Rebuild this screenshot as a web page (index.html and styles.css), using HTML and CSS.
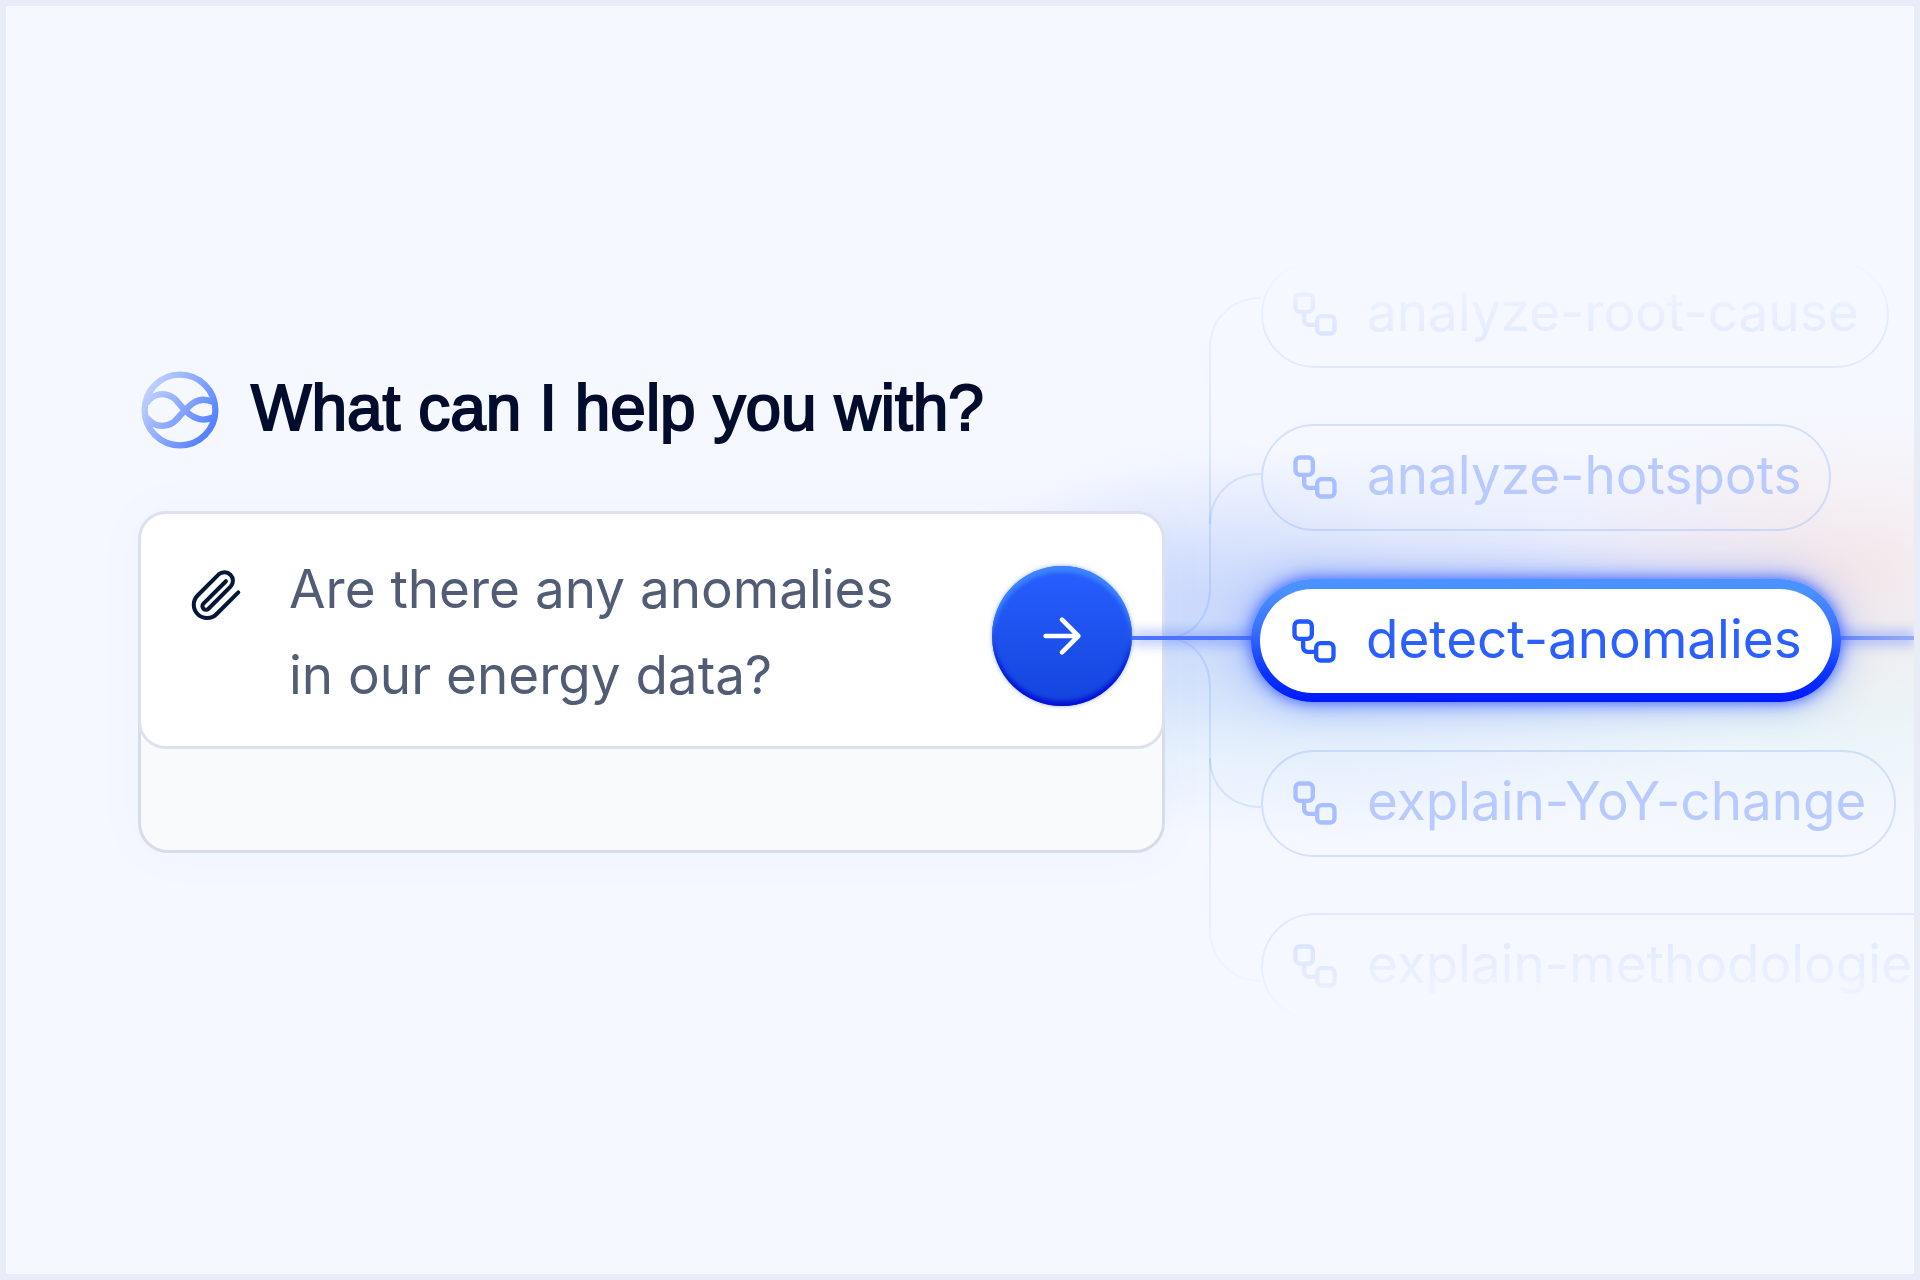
FILE: index.html
```html
<!DOCTYPE html>
<html lang="en">
<head>
    <meta charset="utf-8">
    <title>What can I help you with?</title>
    <link rel="stylesheet" href="styles.css">
</head>
<body>
    <!-- shared icon for every skill -->
    <svg class="defs" width="0" height="0" aria-hidden="true">
        <symbol id="flow" viewBox="0 0 24 24">
            <rect x="3" y="3" width="8" height="8" rx="2"/>
            <path d="M7 11v4a2 2 0 0 0 2 2h4"/>
            <rect x="13" y="13" width="8" height="8" rx="2"/>
        </symbol>
    </svg>

    <main class="frame">
        <div class="glow"></div>

        <section class="ask">
            <header class="title">
                <svg class="logo" viewBox="62 64 236 236" aria-hidden="true">
                    <defs>
                        <linearGradient id="logoFill" gradientUnits="userSpaceOnUse" x1="80" y1="120" x2="270" y2="240">
                            <stop offset="0" stop-color="#bfd1ff"/>
                            <stop offset="1" stop-color="#5681ff"/>
                        </linearGradient>
                    </defs>
                    <g fill="none" stroke="url(#logoFill)" stroke-width="19">
                        <circle cx="180" cy="182" r="107"/>
                        <path d="M78 162C92 142 108 134 125 134C165 134 175 165 195 183C212 200 228 211 250 211C262 211 270 209 282 204"/>
                        <path d="M78 204C92 222 108 230 125 230C165 230 175 200 195 183C212 166 228 151 250 151C262 151 270 153 282 158"/>
                    </g>
                </svg>
                <h1>What can I help you with?</h1>
            </header>

            <form class="card">
                <div class="prompt">
                    <button class="attach" type="button" aria-label="Attach a file">
                        <svg viewBox="187 212 143 148">
                            <path d="M325 278L259.6 343.4A39.6 39.6 0 0 1 203.6 287.4L266.5 224.5A25.5 25.5 0 0 1 302.5 260.5L236.1 326.9A10.6 10.6 0 0 1 221.1 311.9L288 245"/>
                        </svg>
                    </button>
                    <textarea class="question" rows="2" aria-label="Question">Are there any anomalies
in our energy data?</textarea>
                    <button class="send" type="submit" aria-label="Send">
                        <svg viewBox="0 0 24 24">
                            <path d="M5 12h14M12 5l7 7-7 7"/>
                        </svg>
                    </button>
                </div>
            </form>
        </section>

        <svg class="wires" viewBox="0 0 96 760" aria-hidden="true">
            <defs>
                <linearGradient id="wireFade" gradientUnits="userSpaceOnUse" x1="0" y1="30" x2="0" y2="730">
                    <stop offset="0" stop-color="#2a6cff" stop-opacity=".05"/>
                    <stop offset=".3" stop-color="#2a6cff" stop-opacity=".14"/>
                    <stop offset=".7" stop-color="#2a6cff" stop-opacity=".14"/>
                    <stop offset="1" stop-color="#2a6cff" stop-opacity=".02"/>
                </linearGradient>
                <linearGradient id="mainFade" gradientUnits="userSpaceOnUse" x1="0" y1="0" x2="750" y2="0">
                    <stop offset="0" stop-color="#4a74ff"/>
                    <stop offset=".9" stop-color="#6e8efa"/>
                    <stop offset="1" stop-color="#93abf5"/>
                </linearGradient>
            </defs>
            <g class="branch" stroke="url(#wireFade)">
                <path d="M0 378C28 378 45 356 45 328V88C45 60 66 38 96 38"/>
                <path d="M45 264C45 236 66 214 96 214"/>
                <path d="M0 378C28 378 45 400 45 428V670C45 698 66 721 96 721"/>
                <path d="M45 498C45 526 66 547 96 547"/>
            </g>
            <rect class="main-glow" x="-33" y="370" width="783" height="16"/>
            <rect x="-33" y="376" width="783" height="4" fill="url(#mainFade)"/>
        </svg>

        <ul class="skills">
            <li><button type="button" class="skill far top"><svg><use href="#flow"/></svg><span>analyze-root-cause</span></button></li>
            <li><button type="button" class="skill"><svg><use href="#flow"/></svg><span>analyze-hotspots</span></button></li>
            <li><button type="button" class="skill active"><svg><use href="#flow"/></svg><span>detect-anomalies</span></button></li>
            <li><button type="button" class="skill"><svg><use href="#flow"/></svg><span>explain-YoY-change</span></button></li>
            <li><button type="button" class="skill far bottom"><svg><use href="#flow"/></svg><span>explain-methodologies</span></button></li>
        </ul>
    </main>
</body>
</html>
```
FILE: styles.css
```css
*{
    box-sizing: border-box;
    margin: 0;
    padding: 0;
}
body{
    font-family: Inter, "Liberation Sans", sans-serif;
    color: #020d2d;
}
button, textarea{
    border: 0;
    background: none;
    font: inherit;
    color: inherit;
}
.defs{
    position: absolute;
}
.frame{
    position: relative;
    display: flex;
    align-items: center;
    min-height: 100vh;
    padding-left: 132px;
    border: 6px solid #e8ecf7;
    background: #f5f8ff;
    overflow: hidden;
}

/* soft colours behind the skills */
.glow{
    position: absolute;
    top: 0;
    right: 0;
    bottom: 0;
    width: 960px;
    background:
        radial-gradient(ellipse 300px 160px at 890px 565px, rgba(246,212,206,.42), rgba(246,212,206,.22) 45%, rgba(246,212,206,0)),
        radial-gradient(ellipse 360px 140px at 850px 700px, rgba(212,236,232,.42), rgba(212,236,232,.22) 45%, rgba(212,236,232,0)),
        radial-gradient(ellipse 220px 160px at 250px 590px, rgba(150,180,255,.24), rgba(150,180,255,.12) 45%, rgba(150,180,255,0)),
        radial-gradient(ellipse 560px 150px at 480px 590px, rgba(175,185,245,.38), rgba(175,185,245,.18) 45%, rgba(175,185,245,0)),
        radial-gradient(ellipse 450px 170px at 380px 665px, rgba(165,205,243,.42), rgba(165,205,243,.22) 45%, rgba(165,205,243,0));
}

/* left side */
.ask{
    position: relative;
    flex: 1;
    margin-bottom: 56px;
}
.title{
    display: flex;
    align-items: center;
    gap: 32px;
    margin-left: 3px;
    margin-bottom: 62px;
}
.logo{
    width: 78px;
    height: 78px;
}
h1{
    padding-bottom: 4px;
    font-family: "Liberation Sans", Arial, sans-serif;
    font-size: 64px;
    line-height: 74px;
    font-weight: 400;
    white-space: nowrap;
    -webkit-text-stroke: 2px #020d2d;
}
.card{
    padding-bottom: 104px;
    border: 3px solid #d5dcea;
    border-radius: 30px;
    background: #f9fafc;
    box-shadow: 0 0 50px rgba(90,130,255,.04);
}
.prompt{
    display: flex;
    align-items: flex-start;
    margin: -3px;
    padding: 32px 30px 28px 51px;
    border: 3px solid #dce1ed;
    border-radius: 28px;
    background: #fff;
}
.attach{
    width: 48px;
    height: 50px;
    margin-top: 24px;
}
.attach svg{
    display: block;
    width: 100%;
    height: 100%;
    overflow: visible;
    fill: none;
    stroke: #04173a;
    stroke-width: 12;
    stroke-linecap: round;
}
.question{
    flex: 1;
    min-width: 0;
    height: 172px;
    padding-left: 49px;
    font-size: 53px;
    line-height: 86px;
    color: #525d75;
    resize: none;
    overflow: hidden;
}
.send{
    display: grid;
    place-items: center;
    width: 140px;
    height: 140px;
    margin-top: 20px;
    border-radius: 50%;
    background: linear-gradient(#285fff, #1344dc);
    box-shadow: inset 0 6px 4px #3d86ff, inset 0 -5px 4px #0412d6, 0 0 4px rgba(40,90,255,.5);
}
.send svg{
    width: 56px;
    height: 56px;
    fill: none;
    stroke: #fff;
    stroke-width: 2;
    stroke-linecap: round;
    stroke-linejoin: round;
}

/* connectors */
.wires{
    position: relative;
    flex: none;
    width: 96px;
    height: 760px;
    overflow: visible;
    fill: none;
}
.branch{
    stroke-width: 2;
}
.main-glow{
    fill: rgba(80,120,255,.35);
    filter: blur(6px);
}

/* skills */
.skills{
    position: relative;
    flex: none;
    display: flex;
    flex-direction: column;
    gap: 56px;
    width: 653px;
    list-style: none;
}
.skill{
    display: flex;
    align-items: center;
    gap: 26px;
    height: 107px;
    padding: 0 28px 0 26px;
    border: 2px solid rgba(60,120,255,.18);
    border-radius: 54px;
    font-size: 53px;
    color: #b9caff;
    white-space: nowrap;
}
.skill span{
    padding-bottom: 4px;
}
.skill svg{
    width: 52px;
    height: 52px;
    fill: none;
    stroke: #a9beff;
    stroke-width: 2;
}
.far{
    color: #e4ebff;
    border-color: #e0e9ff;
}
.far svg{
    stroke: #dbe4ff;
}
.top{
    mask-image: linear-gradient(transparent, #000 70%);
}
.bottom{
    mask-image: linear-gradient(#000 30%, transparent);
}
.active{
    height: 123px;
    margin: -8px -10px;
    padding: 0 30px 0 28px;
    border: solid transparent;
    border-width: 10px 9px 9px;
    border-radius: 62px;
    background: linear-gradient(#fff, #fff) padding-box, linear-gradient(#4a92ff 8%, #3a72ff 40%, #0b36ff 75%, #0019ff) border-box;
    box-shadow: 0 0 14px rgba(50,90,255,.9), 0 0 36px rgba(60,100,255,.5);
    color: #2a60ff;
}
.active svg{
    stroke: #2158ff;
}
```
